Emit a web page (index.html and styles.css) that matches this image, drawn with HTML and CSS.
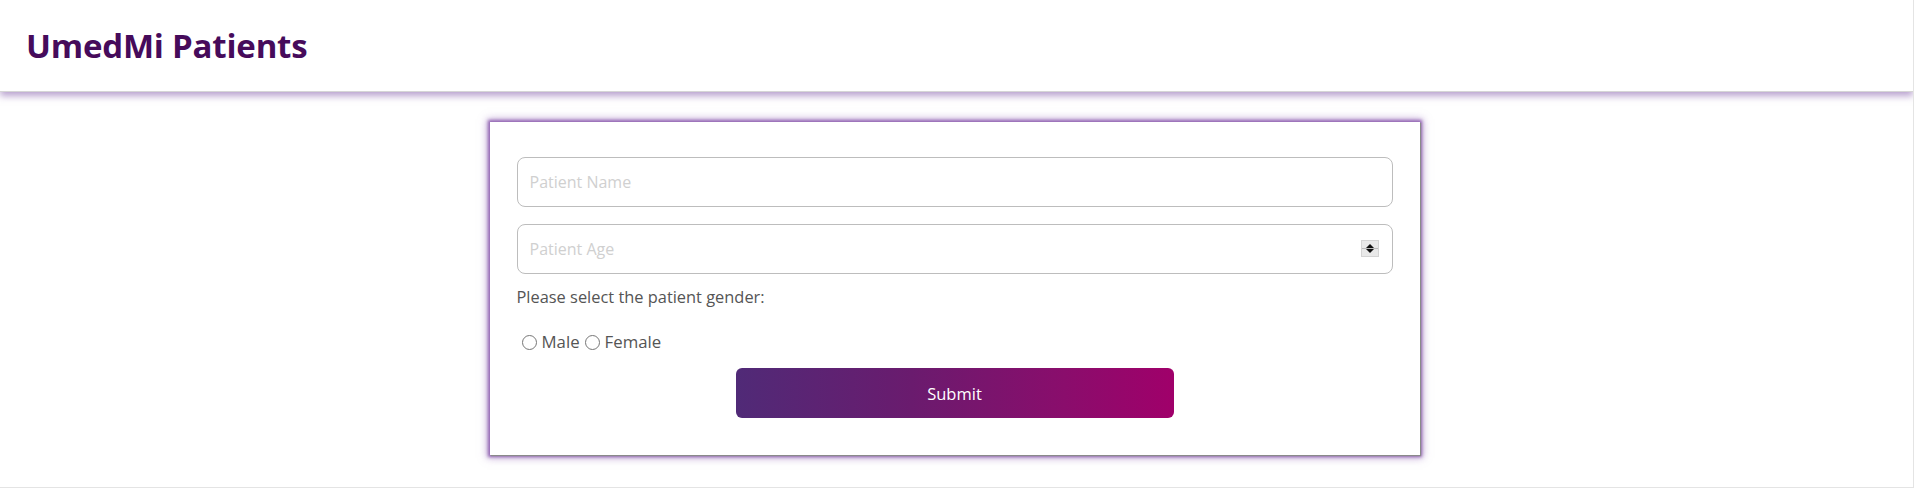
FILE: index.html
```html
<!DOCTYPE html>
<html lang="en">
<head>
<meta charset="utf-8">
<title>UmedMi Patients</title>
<link rel="stylesheet" href="styles.css">
</head>
<body>
<div class="page">
  <header class="topbar">
    <h1 class="brand">UmedMi Patients</h1>
  </header>
  <main class="content">
    <form class="card">
      <input class="field" type="text" placeholder="Patient Name">
      <div class="field-wrap">
        <input class="field field-number" type="number" placeholder="Patient Age">
        <span class="spinner"><span class="arrow up"></span><span class="arrow down"></span></span>
      </div>
      <p class="prompt">Please select the patient gender:</p>
      <div class="radios">
        <input type="radio" id="male" name="gender"><label for="male">Male</label>
        <input type="radio" id="female" name="gender"><label for="female">Female</label>
      </div>
      <div class="actions">
        <button type="button" class="submit">Submit</button>
      </div>
    </form>
  </main>
</div>
</body>
</html>
```

FILE: styles.css
```css
* { box-sizing: border-box; }
html, body { margin: 0; padding: 0; background: #fff; }
body { font-family: "Open Sans", "Noto Sans", "DejaVu Sans", sans-serif; color: #555; }

.page {
  width: 1914px;
  height: 488px;
  border-right: 1px solid #e4e4e4;
  border-bottom: 1px solid #e4e4e4;
  background: #fff;
  overflow: hidden;
}

.topbar {
  height: 92px;
  background: #fff;
  display: flex;
  align-items: center;
  padding-left: 26px;
  border-bottom: 1px solid #d6d6d6;
  box-shadow: 0 4px 7px rgba(115, 70, 160, 0.5);
  position: relative;
}
.brand {
  margin: 0;
  font-size: 33px;
  font-weight: 700;
  color: #460b5b;
  letter-spacing: -0.2px;
}

.content {
  padding-top: 30px;
  display: flex;
  justify-content: center;
}

.card {
  width: 930px;
  margin-left: -4px;
  background: #fff;
  padding: 35px 27px 37px;
  box-shadow: 1px 1px 1px #8a8a8a, 0 0 3px 2px rgba(135, 85, 170, 0.85), 0 0 8px 3px rgba(150, 105, 185, 0.55);
}

.field {
  display: block;
  width: 100%;
  height: 50px;
  border: 1px solid #bdbdbd;
  border-radius: 8px;
  padding: 0 12px;
  font-family: inherit;
  font-size: 16px;
  color: #555;
  background: #fff;
  outline: none;
}
.field::placeholder { color: #d0d0d0; }
.field-number { -moz-appearance: textfield; appearance: textfield; }
.field-number::-webkit-inner-spin-button,
.field-number::-webkit-outer-spin-button { -webkit-appearance: none; margin: 0; }

.field-wrap {
  position: relative;
  margin-top: 17px;
}
.spinner {
  position: absolute;
  right: 14px;
  top: 16px;
  width: 18px;
  height: 17px;
  background: #e9e9e9;
  border: 1px solid #d4d4d4;
  display: flex;
  flex-direction: column;
  align-items: center;
  justify-content: space-between;
  padding: 3px 0;
}
.spinner .arrow {
  width: 0;
  height: 0;
  border-left: 4px solid transparent;
  border-right: 4px solid transparent;
}
.spinner .up { border-bottom: 4px solid #111; }
.spinner .down { border-top: 4px solid #111; }
.spinner::after {
  content: "";
  position: absolute;
  left: 0;
  right: 0;
  top: 7px;
  height: 1px;
  background: #b9b9b9;
}

.prompt {
  margin: 11px 0 0;
  font-size: 16.4px;
  line-height: 23px;
  color: #555;
}

.radios {
  margin-top: 23px;
  display: flex;
  align-items: center;
  font-size: 16.8px;
  line-height: 22px;
  color: #555;
}
.radios input[type="radio"] {
  width: 15px;
  height: 15px;
  margin: 0 5px 0 5px;
  accent-color: #555;
}

.actions {
  margin-top: 15px;
  display: flex;
  justify-content: center;
}
.submit {
  width: 50%;
  height: 50px;
  border: none;
  border-radius: 6px;
  background: linear-gradient(to right, #502a77, #6a1b6e 40%, #8a0d6c 75%, #a0006a);
  color: #fff;
  font-family: inherit;
  font-size: 16.5px;
  cursor: pointer;
}
```
